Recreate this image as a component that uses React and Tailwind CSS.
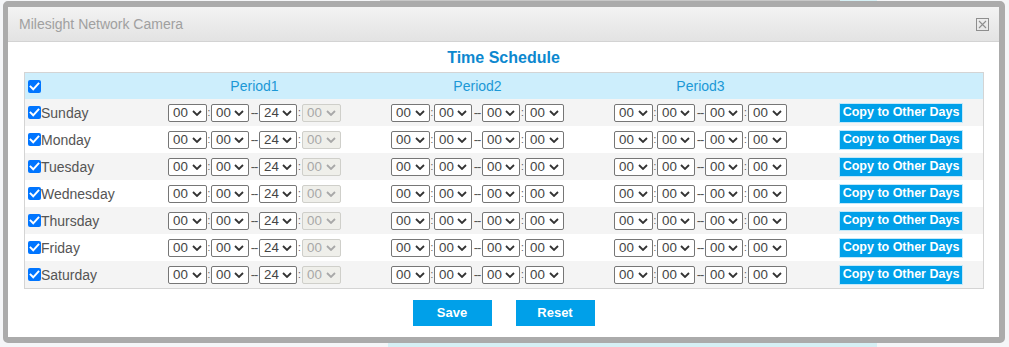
import React from "react";

const days = ["Sunday", "Monday", "Tuesday", "Wednesday", "Thursday", "Friday", "Saturday"];

function Check() {
  return (
    <svg width="13" height="13" viewBox="0 0 13 13" className="block shrink-0">
      <rect x="0" y="0" width="13" height="13" rx="2" fill="#0075ff" />
      <path d="M2.6 6.6 L5.2 9.3 L10.4 3.6" fill="none" stroke="#fff" strokeWidth="2" strokeLinecap="square" />
    </svg>
  );
}

function Sel({ value, disabled, w }) {
  return (
    <div
      className={`flex items-center justify-between h-[18px] rounded-[2px] border pl-[4px] pr-[4px] text-[13.33px] leading-none ${
        disabled ? "bg-[#efefea] border-[#cfcfca] text-[#a8a8a8]" : "bg-white border-[#767676] text-[#444]"
      }`}
      style={{ width: w }}
    >
      <span>{value}</span>
      <svg width="10" height="6" viewBox="0 0 10 6" className="block">
        <path d="M1 1 L5 5 L9 1" fill="none" stroke={disabled ? "#a8a8a8" : "#333"} strokeWidth="1.8" />
      </svg>
    </div>
  );
}

function Group({ end, disabledLast }) {
  return (
    <div className="flex items-center">
      <Sel value="00" w={39} />
      <span className="w-[4px] text-center text-[10px] text-[#555] leading-none">:</span>
      <Sel value="00" w={38} />
      <span className="w-[10px] text-center text-[13px] text-[#555] leading-none tracking-[-1px]">--</span>
      <Sel value={end} w={38} />
      <span className="w-[5px] text-center text-[10px] text-[#555] leading-none">:</span>
      <Sel value="00" w={39} disabled={disabledLast} />
    </div>
  );
}

export default function App() {
  return (
    <div className="relative w-[1009px] h-[347px] overflow-hidden bg-[#f5f6f8]" style={{ fontFamily: '"Liberation Sans", Arial, sans-serif' }}>
      {/* background page underneath */}
      <div className="absolute left-[388px] top-0 w-[489px] h-[347px] bg-[#d6f0f5]" />
      <div className="absolute left-[380px] top-0 w-[460px] h-[2px] bg-[#c8c8c8]" />

      {/* dialog */}
      <div className="absolute left-[3px] top-[1px] w-[1002px] h-[342px] rounded-[5px] border-[6px] border-l-[5px] border-[#ababab] bg-white flex flex-col">
        <div className="h-[35px] shrink-0 flex items-center justify-between pl-[11px] pr-[10px] bg-gradient-to-b from-[#f3f3f3] to-[#e3e3e3] border-b border-[#d3d3d3]">
          <span className="text-[14px] text-[#a0a0a0]">Milesight Network Camera</span>
          <div className="w-[13px] h-[13px] border border-[#8e8e8e] flex items-center justify-center">
            <svg width="11" height="11" viewBox="0 0 11 11" className="block">
              <path d="M2 2 L9 9 M9 2 L2 9" stroke="#8e8e8e" strokeWidth="1.1" />
            </svg>
          </div>
        </div>

        <div className="flex flex-col items-center pt-[6px]">
          <div className="h-[20px] flex items-center text-[16px] font-bold text-[#0c88cf]">Time Schedule</div>
        </div>

        <div className="ml-[16px] mt-[4px] w-[960px] border border-[#d4d4d4] flex flex-col">
          <div className="flex items-center h-[26px] bg-[#cdeefc]">
            <div className="w-[118px] pl-[3px] flex items-center">
              <Check />
            </div>
            {["Period1", "Period2", "Period3"].map((p) => (
              <div key={p} className="w-[223px] text-center text-[14px] text-[#1c98d6]">
                {p}
              </div>
            ))}
          </div>
          {days.map((d, i) => (
            <div key={d} className={`flex items-center h-[27px] ${i % 2 === 0 ? "bg-[#f4f4f4]" : "bg-white"}`}>
              <div className="w-[118px] pl-[3px] flex items-center">
                <Check />
                <span className="text-[14px] text-[#555] pt-[1px]">{d}</span>
              </div>
              <div className="w-[223px] flex justify-center">
                <Group end="24" disabledLast />
              </div>
              <div className="w-[223px] flex justify-center">
                <Group end="00" />
              </div>
              <div className="w-[223px] flex justify-center">
                <Group end="00" />
              </div>
              <div className="flex-1 pl-[27px] flex items-center">
                <div className="w-[124px] h-[20px] bg-[#00a0e9] border border-[#c4e9f9] flex items-center justify-center text-[12.5px] font-bold text-white">
                  Copy to Other Days
                </div>
              </div>
            </div>
          ))}
        </div>

        <div className="flex justify-center gap-[24px] mt-[11px]">
          <div className="w-[79px] h-[26px] bg-[#00a0e9] flex items-center justify-center text-[13px] font-bold text-white">Save</div>
          <div className="w-[79px] h-[26px] bg-[#00a0e9] flex items-center justify-center text-[13px] font-bold text-white">Reset</div>
        </div>
      </div>
    </div>
  );
}
